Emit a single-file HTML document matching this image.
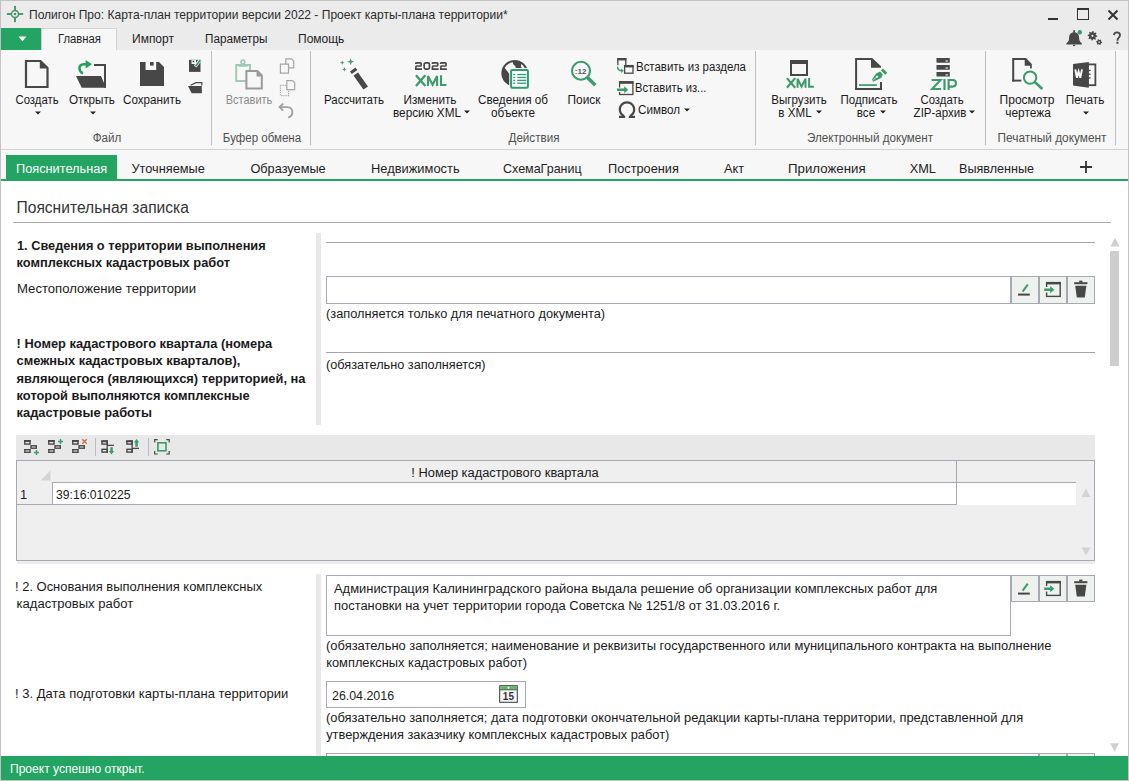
<!DOCTYPE html>
<html><head><meta charset="utf-8"><style>
html,body{margin:0;padding:0;width:1129px;height:781px;overflow:hidden;background:#fff;}
body{position:relative;font-family:"Liberation Sans", sans-serif;}
.t{position:absolute;white-space:nowrap;}
.r{position:absolute;}
svg.r{overflow:visible;}
</style></head><body>
<div class="r" style="left:0px;top:0px;width:1129px;height:28px;background:#ebebeb;"></div>
<div class="t" style="left:29px;top:8px;font-size:12.05px;line-height:14px;font-weight:400;color:#2b2b2b;transform-origin:0 0;">Полигон Про: Карта-план территории версии 2022 - Проект карты-плана территории*</div>
<svg class="r" style="left:5px;top:4px" width="20" height="20" viewBox="0 0 20 20"><circle cx="10" cy="10" r="3.55" fill="none" stroke="#45966c" stroke-width="1.5"/><circle cx="10" cy="10" r="1.3" fill="#45966c"/><rect x="9.05" y="1.9" width="1.9" height="4.6" fill="#45966c"/><rect x="9.05" y="13.5" width="1.9" height="4.6" fill="#45966c"/><rect x="1.9" y="9.05" width="4.6" height="1.9" fill="#45966c"/><rect x="13.5" y="9.05" width="4.6" height="1.9" fill="#45966c"/></svg>
<div class="r" style="left:1048px;top:18px;width:10px;height:2px;background:#333;"></div>
<div class="r" style="left:1077px;top:8px;width:12px;height:12px;box-sizing:border-box;border:1.5px solid #333;border-top-width:2px;"></div>
<svg class="r" style="left:1107px;top:9px" width="12" height="12" viewBox="0 0 12 12"><path d="M1.5 1.5L10.5 10.5M10.5 1.5L1.5 10.5" stroke="#333" stroke-width="2"/></svg>
<div class="r" style="left:0px;top:28px;width:1129px;height:22px;background:#ebebeb;"></div>
<div class="r" style="left:1px;top:28px;width:40px;height:22px;background:#23a462;"></div>
<svg class="r" style="left:18px;top:36px" width="9" height="6" viewBox="0 0 9 6"><path d="M0.5 0.5H8.5L4.5 5.2Z" fill="#fff"/></svg>
<div class="r" style="left:41px;top:28px;width:76px;height:23px;background:#f7f7f7;box-sizing:border-box;border:1px solid #d2d2d2;border-bottom:none;"></div>
<div class="t" style="left:57.5px;top:32px;font-size:12px;line-height:14px;font-weight:400;color:#1e1e1e;transform:scaleX(0.94);transform-origin:0 0;">Главная</div>
<div class="t" style="left:132px;top:32px;font-size:12px;line-height:14px;font-weight:400;color:#1e1e1e;transform-origin:0 0;">Импорт</div>
<div class="t" style="left:205.3px;top:32px;font-size:12px;line-height:14px;font-weight:400;color:#1e1e1e;transform:scaleX(0.975);transform-origin:0 0;">Параметры</div>
<div class="t" style="left:298px;top:32px;font-size:12px;line-height:14px;font-weight:400;color:#1e1e1e;transform-origin:0 0;">Помощь</div>
<svg class="r" style="left:1062px;top:27px" width="24" height="22" viewBox="0 0 24 22"><path d="M12.1 5.3c-3.2 0-4.9 2.4-5 5.4-.1 2.6-.4 3.8-2.7 5.6v1.3h15.4v-1.3c-2.3-1.8-2.6-3-2.7-5.6-.1-3-1.8-5.4-5-5.4z" fill="#474747"/><rect x="11.2" y="3.2" width="1.8" height="2.2" fill="#474747"/><rect x="11" y="17.9" width="2.2" height="1.2" fill="#474747"/><circle cx="17.8" cy="5.2" r="2.2" fill="#3a9a68"/></svg>
<svg class="r" style="left:1085px;top:28px" width="20" height="20" viewBox="0 0 20 20"><polygon points="12.30,7.80 12.21,8.74 10.69,9.12 10.37,9.72 10.89,11.19 10.17,11.79 8.82,10.99 8.17,11.19 7.50,12.60 6.56,12.51 6.18,10.99 5.58,10.67 4.11,11.19 3.51,10.47 4.31,9.12 4.11,8.47 2.70,7.80 2.79,6.86 4.31,6.48 4.63,5.88 4.11,4.41 4.83,3.81 6.18,4.61 6.83,4.41 7.50,3.00 8.44,3.09 8.82,4.61 9.42,4.93 10.89,4.41 11.49,5.13 10.69,6.48 10.89,7.13" fill="#474747"/><circle cx="7.5" cy="7.8" r="1.1" fill="#ebebeb"/><polygon points="17.10,14.10 17.00,14.88 15.97,15.18 15.63,15.63 15.60,16.70 14.88,17.00 14.10,16.26 13.54,16.19 12.60,16.70 11.98,16.22 12.23,15.18 12.01,14.66 11.10,14.10 11.20,13.32 12.23,13.02 12.57,12.57 12.60,11.50 13.32,11.20 14.10,11.94 14.66,12.01 15.60,11.50 16.22,11.98 15.97,13.02 16.19,13.54" fill="#474747"/><circle cx="14.1" cy="14.1" r="0.8" fill="#ebebeb"/></svg>
<svg class="r" style="left:1111px;top:30px" width="12" height="16" viewBox="0 0 12 16"><path d="M2.9 5.2C3.1 3.3 4.3 2.4 5.9 2.4c1.8 0 3.1 1.1 3.1 2.8 0 2.3-2.5 2.6-2.5 4.9v.7" fill="none" stroke="#474747" stroke-width="1.8"/><rect x="5.4" y="11.8" width="2.1" height="1.9" fill="#474747"/></svg>
<div class="r" style="left:0px;top:50px;width:1129px;height:99px;background:#f7f7f7;"></div>
<div class="r" style="left:0px;top:149px;width:1129px;height:1px;background:#d2d2d2;"></div>
<div class="r" style="left:211px;top:51px;width:1px;height:94px;background:#bdbdc4;"></div>
<div class="r" style="left:310px;top:51px;width:1px;height:94px;background:#bdbdc4;"></div>
<div class="r" style="left:755px;top:51px;width:1px;height:94px;background:#bdbdc4;"></div>
<div class="r" style="left:985px;top:51px;width:1px;height:94px;background:#bdbdc4;"></div>
<div class="r" style="left:1115px;top:51px;width:1px;height:94px;background:#bdbdc4;"></div>
<div class="t" style="left:-43.50px;top:131px;width:300px;text-align:center;font-size:12px;line-height:14px;font-weight:400;color:#505050;transform:scaleX(0.97);transform-origin:50% 0;">Файл</div>
<div class="t" style="left:111.50px;top:131px;width:300px;text-align:center;font-size:12px;line-height:14px;font-weight:400;color:#505050;transform:scaleX(0.96);transform-origin:50% 0;">Буфер обмена</div>
<div class="t" style="left:383.50px;top:131px;width:300px;text-align:center;font-size:12px;line-height:14px;font-weight:400;color:#505050;transform:scaleX(0.97);transform-origin:50% 0;">Действия</div>
<div class="t" style="left:720.00px;top:131px;width:300px;text-align:center;font-size:12px;line-height:14px;font-weight:400;color:#505050;transform:scaleX(0.97);transform-origin:50% 0;">Электронный документ</div>
<div class="t" style="left:901.50px;top:131px;width:300px;text-align:center;font-size:12px;line-height:14px;font-weight:400;color:#505050;transform:scaleX(0.988);transform-origin:50% 0;">Печатный документ</div>
<svg class="r" style="left:24px;top:59px" width="26" height="30" viewBox="0 0 26 30"><path d="M2 2H16.5L23.5 9V28H2Z" fill="none" stroke="#474747" stroke-width="2.2"/><path d="M15.8 1V9.4H24.4Z" fill="#474747"/></svg>
<div class="t" style="left:-113.50px;top:93px;width:300px;text-align:center;font-size:12px;line-height:14px;font-weight:400;color:#1a1a1a;transform:scaleX(0.945);transform-origin:50% 0;">Создать</div>
<svg class="r" style="left:35px;top:111px" width="6" height="4" viewBox="0 0 6 4"><path d="M0 0.5H6L3 3.6Z" fill="#222"/></svg>
<svg class="r" style="left:70px;top:54px" width="40" height="38" viewBox="0 0 40 38"><path d="M24 11H35V33.7" fill="none" stroke="#474747" stroke-width="2"/><path d="M6 22H31L36 33.7H11.7Z" fill="#474747"/><path d="M13 19.3C8.5 17.5 7.8 10.6 13.8 10.3H17.5" fill="none" stroke="#22a060" stroke-width="2.6"/><path d="M15.6 5.9L22 10.2L15.6 14.5Z" fill="#22a060"/></svg>
<div class="t" style="left:-58.00px;top:93px;width:300px;text-align:center;font-size:12px;line-height:14px;font-weight:400;color:#1a1a1a;transform:scaleX(0.975);transform-origin:50% 0;">Открыть</div>
<svg class="r" style="left:90px;top:111px" width="6" height="4" viewBox="0 0 6 4"><path d="M0 0.5H6L3 3.6Z" fill="#222"/></svg>
<svg class="r" style="left:140px;top:62px" width="24" height="24" viewBox="0 0 24 24"><path d="M0 0H19L24 5V24H0Z" fill="#474747"/><rect x="5.6" y="0" width="10.6" height="8" fill="#f7f7f7"/><rect x="10" y="0" width="3.6" height="3.6" fill="#474747"/></svg>
<div class="t" style="left:2.00px;top:93px;width:300px;text-align:center;font-size:12px;line-height:14px;font-weight:400;color:#1a1a1a;transform:scaleX(0.972);transform-origin:50% 0;">Сохранить</div>
<svg class="r" style="left:188px;top:58px" width="14" height="15" viewBox="0 0 14 15"><path d="M1 1.8H12.5V13.9H1Z" fill="#474747"/><rect x="3.5" y="1.8" width="4.5" height="4.2" fill="#f7f7f7"/><rect x="4.6" y="2.6" width="1.6" height="1.6" fill="#474747"/><path d="M7.2 8.5L12.3 1.8" stroke="#f7f7f7" stroke-width="3.2"/><path d="M7.6 8.3L12.3 2" stroke="#3a9a68" stroke-width="1.7"/></svg>
<svg class="r" style="left:186px;top:80px" width="18" height="16" viewBox="0 0 18 16"><path d="M4.6 5.2L10 2.6H15.8V5.6" fill="none" stroke="#474747" stroke-width="1.2"/><path d="M2 6H15.8V13.3H5.7Z" fill="#474747"/></svg>
<svg class="r" style="left:233px;top:56px" width="32" height="36" viewBox="0 0 32 36"><path d="M3.2 9H17V25H3.2Z" fill="none" stroke="#9fcab3" stroke-width="1.9"/><circle cx="9.9" cy="6" r="1.9" fill="none" stroke="#9fcab3" stroke-width="1.7"/><rect x="5.5" y="8.2" width="9" height="2.6" fill="#9fcab3"/><path d="M13.4 15H24.5L28.8 19.3V32.6H13.4Z" fill="#f7f7f7" stroke="#9b9b9b" stroke-width="2"/><path d="M23.5 14V20.5H30Z" fill="#9b9b9b"/></svg>
<div class="t" style="left:99.00px;top:93px;width:300px;text-align:center;font-size:12px;line-height:14px;font-weight:400;color:#8c8c8c;transform:scaleX(0.915);transform-origin:50% 0;">Вставить</div>
<svg class="r" style="left:278px;top:56px" width="18" height="20" viewBox="0 0 18 20"><path d="M7.8 2.8H13.6L15.7 4.9V11.8H7.8Z" fill="#f7f7f7" stroke="#a5a5a5" stroke-width="1.2"/><path d="M2.4 8.1H10.5V17.2H2.4Z" fill="#f7f7f7" stroke="#a5a5a5" stroke-width="1.2"/></svg>
<svg class="r" style="left:278px;top:78px" width="18" height="20" viewBox="0 0 18 20"><path d="M8.8 2.6H14.6L16.7 4.7V11.6H8.8Z" fill="#f7f7f7" stroke="#a5a5a5" stroke-width="1.2"/><path d="M2.4 7.4H8.5M2.4 7.4V17.6H10.6V11.6" fill="none" stroke="#a5a5a5" stroke-width="1.1" stroke-dasharray="1.1 1.1"/></svg>
<svg class="r" style="left:277px;top:100px" width="19" height="20" viewBox="0 0 19 20"><path d="M3.2 7.1H10.5C13.6 7.1 15.4 9.4 15.4 12.2S13.4 16.9 11.2 17.6" fill="none" stroke="#a0a0a0" stroke-width="1.9"/><path d="M6.2 3.6L2.6 7.1L6.2 10.6" fill="none" stroke="#a0a0a0" stroke-width="1.9"/></svg>
<svg class="r" style="left:330px;top:54px" width="44" height="40" viewBox="0 0 44 40"><path d="M20 17.5L25.5 13.6L27.3 16.1L21.8 20Z" fill="#474747"/><path d="M23.5 21.5L28 18.4L38 32.4L33.4 35.6Z" fill="#474747"/><path d="M20.7 4.2L21.6 6.8L24.2 7.7L21.6 8.6L20.7 11.2L19.8 8.6L17.2 7.7L19.8 6.8Z" fill="#3d9a6b"/><path d="M12.3 6.4L12.9 8.1L14.6 8.7L12.9 9.3L12.3 11L11.7 9.3L10 8.7L11.7 8.1Z" fill="#3d9a6b"/><path d="M14.4 13.1L15 14.8L16.7 15.4L15 16L14.4 17.7L13.8 16L12.1 15.4L13.8 14.8Z" fill="#3d9a6b"/></svg>
<div class="t" style="left:204.00px;top:93px;width:300px;text-align:center;font-size:12px;line-height:14px;font-weight:400;color:#1a1a1a;transform:scaleX(0.958);transform-origin:50% 0;">Рассчитать</div>
<svg class="r" style="left:415px;top:62px" width="33" height="9" viewBox="0 0 33 9"><path d="M0.85 2.05 V1.25 Q0.85 0.85 1.6 0.85 H5.4 Q6.15 0.85 6.15 1.6 V3.0 Q6.15 4.0 5.4 4.0 H1.6 Q0.85 4.0 0.85 5.6 V7.15 H7" fill="none" stroke="#474747" stroke-width="1.7"/><rect x="9.15" y="0.85" width="5.3" height="6.3" rx="1.6" fill="none" stroke="#474747" stroke-width="1.7"/><path d="M17.450000000000003 2.05 V1.25 Q17.450000000000003 0.85 18.200000000000003 0.85 H22.0 Q22.75 0.85 22.75 1.6 V3.0 Q22.75 4.0 22.0 4.0 H18.200000000000003 Q17.450000000000003 4.0 17.450000000000003 5.6 V7.15 H23.6" fill="none" stroke="#474747" stroke-width="1.7"/><path d="M25.75 2.05 V1.25 Q25.75 0.85 26.5 0.85 H30.299999999999997 Q31.049999999999997 0.85 31.049999999999997 1.6 V3.0 Q31.049999999999997 4.0 30.299999999999997 4.0 H26.5 Q25.75 4.0 25.75 5.6 V7.15 H31.9" fill="none" stroke="#474747" stroke-width="1.7"/></svg>
<svg class="r" style="left:413px;top:73px" width="37" height="16" viewBox="0 0 37 16"><path d="M2.95 2.3 L12.35 13.0 M12.35 2.3 L2.95 13.0" stroke="#3d9a6b" stroke-width="2.31" fill="none"/><path d="M14.97 13.0 V2.93 L19.55 11.74 L24.12 2.93 V13.0" stroke="#3d9a6b" stroke-width="2.1" fill="none" stroke-linejoin="miter"/><path d="M28.02 2.3 V11.95 H33.50" stroke="#3d9a6b" stroke-width="2.1" fill="none"/></svg>
<div class="t" style="left:279.50px;top:93px;width:300px;text-align:center;font-size:12px;line-height:14px;font-weight:400;color:#1a1a1a;transform:scaleX(0.979);transform-origin:50% 0;">Изменить</div>
<div class="t" style="left:277.00px;top:106px;width:300px;text-align:center;font-size:12px;line-height:14px;font-weight:400;color:#1a1a1a;transform:scaleX(0.981);transform-origin:50% 0;">версию XML</div>
<svg class="r" style="left:464px;top:110px" width="6" height="4" viewBox="0 0 6 4"><path d="M0 0.5H6L3 3.6Z" fill="#222"/></svg>
<svg class="r" style="left:496px;top:54px" width="40" height="40" viewBox="0 0 40 40"><circle cx="18.7" cy="19.2" r="13.3" fill="#474747"/><clipPath id="gclip"><circle cx="18.7" cy="19.2" r="11.3"/></clipPath><g clip-path="url(#gclip)"><path d="M7.8 12.8L12 6L16.4 5.5L17.2 10.2L19.6 12.6L19.6 15.5L14 15.5L14 20.8Z" fill="#f7f7f7"/><path d="M25.2 9.6L32 9.6L32 14.8H26.3L25 12.4Z" fill="#f7f7f7"/></g><rect x="13.2" y="14" width="20.6" height="21.8" rx="1.5" fill="#f7f7f7"/><rect x="15.1" y="15.9" width="16.8" height="17.9" rx="1" fill="#fff" stroke="#2a9d72" stroke-width="2"/><g fill="#2a9d72"><rect x="17.2" y="19.9" width="1.9" height="1.3"/><rect x="21.3" y="19.9" width="8.9" height="1.3"/><rect x="17.2" y="22.8" width="1.9" height="1.3"/><rect x="21.3" y="22.8" width="8.9" height="1.3"/><rect x="17.2" y="25.7" width="1.9" height="1.3"/><rect x="21.3" y="25.7" width="8.9" height="1.3"/><rect x="17.2" y="28.6" width="1.9" height="1.3"/><rect x="21.3" y="28.6" width="8.9" height="1.3"/></g></svg>
<div class="t" style="left:363.00px;top:93px;width:300px;text-align:center;font-size:12px;line-height:14px;font-weight:400;color:#1a1a1a;transform:scaleX(0.976);transform-origin:50% 0;">Сведения об</div>
<div class="t" style="left:363.00px;top:106px;width:300px;text-align:center;font-size:12px;line-height:14px;font-weight:400;color:#1a1a1a;transform:scaleX(0.983);transform-origin:50% 0;">объекте</div>
<svg class="r" style="left:566px;top:56px" width="36" height="36" viewBox="0 0 36 36"><circle cx="15" cy="14.75" r="9" fill="none" stroke="#3d9a6b" stroke-width="2.1"/><path d="M21.5 21.5L29.3 29.3" stroke="#3d9a6b" stroke-width="3.5"/><text x="14.6" y="17.7" font-family="Liberation Sans" font-weight="700" font-size="8" text-anchor="middle" fill="#555">:12</text></svg>
<div class="t" style="left:433.50px;top:93px;width:300px;text-align:center;font-size:12px;line-height:14px;font-weight:400;color:#1a1a1a;transform:scaleX(0.99);transform-origin:50% 0;">Поиск</div>
<svg class="r" style="left:612px;top:54px" width="24" height="22" viewBox="0 0 24 22"><path d="M5.8 4.6H13.8V12" fill="none" stroke="#474747" stroke-width="1.3"/><rect x="5.2" y="4" width="9.2" height="2.4" fill="#474747"/><path d="M5.8 5V11.2" fill="none" stroke="#474747" stroke-width="1.3"/><rect x="12.6" y="11.6" width="8.4" height="7.6" fill="#f7f7f7" stroke="#474747" stroke-width="1.3"/><rect x="12" y="11" width="9.6" height="2.4" fill="#474747"/><path d="M5.6 12.8C5.6 16.4 7.5 16.8 10 16.8" fill="none" stroke="#3d9a6b" stroke-width="1.5"/><path d="M9.2 14.6L11.8 16.8L9.2 19Z" fill="#3d9a6b"/></svg>
<div class="t" style="left:635.5px;top:60px;font-size:12px;line-height:14px;font-weight:400;color:#1a1a1a;transform:scaleX(0.955);transform-origin:0 0;">Вставить из раздела</div>
<svg class="r" style="left:612px;top:78px" width="24" height="20" viewBox="0 0 24 20"><rect x="7.6" y="3.9" width="13.3" height="12.6" fill="none" stroke="#474747" stroke-width="1.3"/><rect x="7" y="3.2" width="14.5" height="2.6" fill="#474747"/><rect x="4" y="9.5" width="9" height="4.4" fill="#f7f7f7"/><path d="M5 10.4H12.2V8.2L16.2 11.7L12.2 15.2V13H5Z" fill="#3d9a6b"/></svg>
<div class="t" style="left:635px;top:81px;font-size:12px;line-height:14px;font-weight:400;color:#1a1a1a;transform:scaleX(0.935);transform-origin:0 0;">Вставить из...</div>
<svg class="r" style="left:616px;top:100px" width="22" height="20" viewBox="0 0 22 20"><path d="M8 16.1A7.2 7.2 0 1 1 14 16.1" fill="none" stroke="#474747" stroke-width="2.1"/><rect x="3" y="15.8" width="6.2" height="2.2" fill="#474747"/><rect x="12.8" y="15.8" width="6.2" height="2.2" fill="#474747"/></svg>
<div class="t" style="left:637.6px;top:103px;font-size:12px;line-height:14px;font-weight:400;color:#1a1a1a;transform:scaleX(0.97);transform-origin:0 0;">Символ</div>
<svg class="r" style="left:684px;top:108px" width="6" height="4" viewBox="0 0 6 4"><path d="M0 0.5H6L3 3.6Z" fill="#222"/></svg>
<div class="r" style="left:790px;top:60px;width:18px;height:16px;box-sizing:border-box;border:2px solid #474747;border-top-width:4px;"></div>
<svg class="r" style="left:784px;top:76px" width="32" height="14" viewBox="0 0 32 14"><path d="M2.90 2.1 L11.17 11.799999999999999 M11.17 2.1 L2.90 11.799999999999999" stroke="#3d9a6b" stroke-width="2.20" fill="none"/><path d="M13.56 11.799999999999999 V2.70 L17.54 10.60 L21.53 2.70 V11.799999999999999" stroke="#3d9a6b" stroke-width="2.0" fill="none" stroke-linejoin="miter"/><path d="M25.12 2.1 V10.80 H29.90" stroke="#3d9a6b" stroke-width="2.0" fill="none"/></svg>
<div class="t" style="left:648.50px;top:93px;width:300px;text-align:center;font-size:12px;line-height:14px;font-weight:400;color:#1a1a1a;transform:scaleX(0.965);transform-origin:50% 0;">Выгрузить</div>
<div class="t" style="left:645.00px;top:106px;width:300px;text-align:center;font-size:12px;line-height:14px;font-weight:400;color:#1a1a1a;transform:scaleX(0.97);transform-origin:50% 0;">в XML</div>
<svg class="r" style="left:816px;top:110px" width="6" height="4" viewBox="0 0 6 4"><path d="M0 0.5H6L3 3.6Z" fill="#222"/></svg>
<svg class="r" style="left:850px;top:54px" width="42" height="40" viewBox="0 0 42 40"><path d="M6.1 34.9V5.1H21.5" fill="none" stroke="#474747" stroke-width="2"/><path d="M5.1 34.9H31V28" fill="none" stroke="#474747" stroke-width="2"/><path d="M21 4.1H22.2L31 12.3V13.8H21Z" fill="#474747"/><rect x="9" y="30.2" width="17.9" height="1.7" fill="#3a9a68"/><path d="M22 25.6L26.1 19.5L30.2 17.4L32.8 20.5L31.2 24.1L23 27.7Z" fill="#3a9a68"/><path d="M31 16.6L33 14.6L37.2 18.8L35.2 20.8Z" fill="#3a9a68"/><path d="M22.6 26.6L26.6 23" stroke="#f7f7f7" stroke-width="0.8"/><circle cx="27" cy="22.8" r="1.1" fill="#f7f7f7"/></svg>
<div class="t" style="left:719.00px;top:93px;width:300px;text-align:center;font-size:12px;line-height:14px;font-weight:400;color:#1a1a1a;transform:scaleX(0.96);transform-origin:50% 0;">Подписать</div>
<div class="t" style="left:716.00px;top:106px;width:300px;text-align:center;font-size:12px;line-height:14px;font-weight:400;color:#1a1a1a;transform:scaleX(0.97);transform-origin:50% 0;">все</div>
<svg class="r" style="left:880px;top:110px" width="6" height="4" viewBox="0 0 6 4"><path d="M0 0.5H6L3 3.6Z" fill="#222"/></svg>
<svg class="r" style="left:926px;top:54px" width="36" height="38" viewBox="0 0 36 38"><rect x="10.5" y="4.1" width="13.3" height="4.6" rx="0.4" fill="#474747"/><rect x="19.5" y="6.3999999999999995" width="2.4" height="1.2" fill="#e8e8e8"/><rect x="10.5" y="11.1" width="13.3" height="4.6" rx="0.4" fill="#474747"/><rect x="19.5" y="13.399999999999999" width="2.4" height="1.2" fill="#e8e8e8"/><rect x="10.5" y="18" width="13.3" height="4.6" rx="0.4" fill="#474747"/><rect x="19.5" y="20.3" width="2.4" height="1.2" fill="#e8e8e8"/><path d="M5.6 26H14.6L6.2 35H15" fill="none" stroke="#3d9a6b" stroke-width="2.1" stroke-linejoin="miter"/><rect x="17.4" y="25" width="2.2" height="11" fill="#3d9a6b"/><path d="M22.6 36V26H26.6C28.8 26 30 27.4 30 29.3S28.8 32.6 26.6 32.6H22.6" fill="none" stroke="#3d9a6b" stroke-width="2.1"/></svg>
<div class="t" style="left:791.50px;top:93px;width:300px;text-align:center;font-size:12px;line-height:14px;font-weight:400;color:#1a1a1a;transform:scaleX(0.945);transform-origin:50% 0;">Создать</div>
<div class="t" style="left:790.00px;top:106px;width:300px;text-align:center;font-size:12px;line-height:14px;font-weight:400;color:#1a1a1a;transform:scaleX(0.96);transform-origin:50% 0;">ZIP-архив</div>
<svg class="r" style="left:969px;top:110px" width="6" height="4" viewBox="0 0 6 4"><path d="M0 0.5H6L3 3.6Z" fill="#222"/></svg>
<svg class="r" style="left:1006px;top:54px" width="40" height="38" viewBox="0 0 40 38"><path d="M7.2 27.5V5H19.2" fill="none" stroke="#474747" stroke-width="2"/><path d="M6.2 26.6H15.4" stroke="#474747" stroke-width="1.9"/><path d="M18.7 4H20L25.8 10V14.6H24.1V11.7H18.7Z" fill="#474747"/><circle cx="24.1" cy="23.6" r="6.2" fill="none" stroke="#3d9a6b" stroke-width="2"/><path d="M29 28.3L36.4 35" stroke="#3d9a6b" stroke-width="2.6"/></svg>
<div class="t" style="left:877.00px;top:93px;width:300px;text-align:center;font-size:12px;line-height:14px;font-weight:400;color:#1a1a1a;transform-origin:50% 0;">Просмотр</div>
<div class="t" style="left:878.00px;top:106px;width:300px;text-align:center;font-size:12px;line-height:14px;font-weight:400;color:#1a1a1a;transform:scaleX(0.99);transform-origin:50% 0;">чертежа</div>
<svg class="r" style="left:1070px;top:60px" width="30" height="30" viewBox="0 0 30 30"><rect x="17.8" y="4.4" width="7.6" height="20.8" fill="none" stroke="#474747" stroke-width="1.8"/><path d="M3 4L18.8 2.1V27.7L3 25.6Z" fill="#474747"/><g fill="#474747"><rect x="18" y="9.8" width="2.6" height="1.3"/><rect x="18" y="13.6" width="2.6" height="1.3"/><rect x="18" y="17.3" width="2.6" height="1.3"/></g><path d="M5.3 9.4L6.9 17.7L8.6 11.5L10.3 17.7L12 9.4" fill="none" stroke="#fff" stroke-width="1.9" stroke-linejoin="miter"/></svg>
<div class="t" style="left:935.00px;top:93px;width:300px;text-align:center;font-size:12px;line-height:14px;font-weight:400;color:#1a1a1a;transform:scaleX(0.98);transform-origin:50% 0;">Печать</div>
<svg class="r" style="left:1083px;top:111px" width="6" height="4" viewBox="0 0 6 4"><path d="M0 0.5H6L3 3.6Z" fill="#222"/></svg>
<div class="r" style="left:0px;top:150px;width:1129px;height:29px;background:#f7f7f7;"></div>
<div class="r" style="left:6px;top:155px;width:111px;height:24px;background:#23a462;"></div>
<div class="r" style="left:1px;top:179px;width:1127px;height:2px;background:#23a462;"></div>
<div class="t" style="left:16px;top:161px;font-size:12.75px;line-height:15px;font-weight:400;color:#fff;transform-origin:0 0;">Пояснительная</div>
<div class="t" style="left:131.5px;top:161px;font-size:12.75px;line-height:15px;font-weight:400;color:#1e1e1e;transform-origin:0 0;">Уточняемые</div>
<div class="t" style="left:250.4px;top:161px;font-size:12.75px;line-height:15px;font-weight:400;color:#1e1e1e;transform-origin:0 0;">Образуемые</div>
<div class="t" style="left:370.6px;top:161px;font-size:12.75px;line-height:15px;font-weight:400;color:#1e1e1e;transform:scaleX(1.01);transform-origin:0 0;">Недвижимость</div>
<div class="t" style="left:503px;top:161px;font-size:12.75px;line-height:15px;font-weight:400;color:#1e1e1e;transform:scaleX(0.98);transform-origin:0 0;">СхемаГраниц</div>
<div class="t" style="left:608px;top:161px;font-size:12.75px;line-height:15px;font-weight:400;color:#1e1e1e;transform-origin:0 0;">Построения</div>
<div class="t" style="left:724px;top:161px;font-size:12.75px;line-height:15px;font-weight:400;color:#1e1e1e;transform-origin:0 0;">Акт</div>
<div class="t" style="left:788px;top:161px;font-size:12.75px;line-height:15px;font-weight:400;color:#1e1e1e;transform:scaleX(1.04);transform-origin:0 0;">Приложения</div>
<div class="t" style="left:909.7px;top:161px;font-size:12.75px;line-height:15px;font-weight:400;color:#1e1e1e;transform-origin:0 0;">XML</div>
<div class="t" style="left:959px;top:161px;font-size:12.75px;line-height:15px;font-weight:400;color:#1e1e1e;transform:scaleX(0.987);transform-origin:0 0;">Выявленные</div>
<svg class="r" style="left:1079px;top:160px" width="14" height="14" viewBox="0 0 14 14"><path d="M7 1V13M1 7H13" stroke="#333" stroke-width="1.8"/></svg>
<div class="t" style="left:16.5px;top:199px;font-size:15.6px;line-height:17px;font-weight:400;color:#333333;transform-origin:0 0;">Пояснительная записка</div>
<div class="r" style="left:13px;top:222px;width:1098px;height:1px;background:#aaaab2;"></div>
<div class="r" style="left:316px;top:233px;width:5px;height:192px;background:#e8e8e8;"></div>
<div class="t" style="left:16.6px;top:238px;font-size:12.85px;line-height:15px;font-weight:700;color:#1a1a1a;transform:scaleX(0.993);transform-origin:0 0;">1. Сведения о территории выполнения</div>
<div class="t" style="left:16.6px;top:255px;font-size:12.85px;line-height:15px;font-weight:700;color:#1a1a1a;transform-origin:0 0;">комплексных кадастровых работ</div>
<div class="t" style="left:16.6px;top:281px;font-size:13.05px;line-height:15px;font-weight:400;color:#1a1a1a;transform:scaleX(1.006);transform-origin:0 0;">Местоположение территории</div>
<div class="r" style="left:326px;top:242px;width:769px;height:1px;background:#a3a3a8;"></div>
<div class="r" style="left:326px;top:276px;width:685px;height:28px;background:#fff;box-sizing:border-box;border:1px solid #a8a8b2;"></div>
<div class="r" style="left:1011px;top:276px;width:28px;height:28px;background:#eef2ef;box-sizing:border-box;border:1px solid #a8a8b2;"></div>
<div class="r" style="left:1039px;top:276px;width:28px;height:28px;background:#eef2ef;box-sizing:border-box;border:1px solid #a8a8b2;"></div>
<div class="r" style="left:1067px;top:276px;width:28px;height:28px;background:#eef2ef;box-sizing:border-box;border:1px solid #a8a8b2;"></div>
<svg class="r" style="left:1011px;top:276px" width="28" height="27" viewBox="0 0 28 27"><rect x="7" y="17.6" width="11.8" height="2" fill="#474747"/><path d="M11.6 15.6L16.8 8.6" stroke="#3a9a68" stroke-width="2"/></svg>
<svg class="r" style="left:1039px;top:276px" width="28" height="27" viewBox="0 0 28 27"><rect x="7.6" y="6.6" width="13.6" height="13.8" fill="none" stroke="#474747" stroke-width="1.4"/><rect x="7" y="6" width="14.8" height="2.4" fill="#474747"/><rect x="4.8" y="11" width="9" height="5.6" fill="#eef2ef"/><path d="M5.2 12.4H11.2V10.2L15.4 13.7L11.2 17.2V15H5.2Z" fill="#3d9a6b"/></svg>
<svg class="r" style="left:1067px;top:276px" width="28" height="27" viewBox="0 0 28 27"><rect x="7.2" y="6.2" width="13.2" height="2" fill="#474747"/><rect x="12.2" y="4.6" width="3.2" height="2" fill="#474747"/><path d="M8.2 9.8H19.4L17.8 21.4H9.8Z" fill="#474747"/></svg>
<div class="t" style="left:326.3px;top:306px;font-size:12.85px;line-height:15px;font-weight:400;color:#1a1a1a;transform:scaleX(0.996);transform-origin:0 0;">(заполняется только для печатного документа)</div>
<div class="t" style="left:16.6px;top:336px;font-size:12.85px;line-height:15px;font-weight:700;color:#1a1a1a;transform-origin:0 0;">! Номер кадастрового квартала (номера</div>
<div class="t" style="left:16.6px;top:353px;font-size:12.85px;line-height:15px;font-weight:700;color:#1a1a1a;transform-origin:0 0;">смежных кадастровых кварталов),</div>
<div class="t" style="left:16.6px;top:371px;font-size:12.85px;line-height:15px;font-weight:700;color:#1a1a1a;transform-origin:0 0;">являющегося (являющихся) территорией, на</div>
<div class="t" style="left:16.6px;top:388px;font-size:12.85px;line-height:15px;font-weight:700;color:#1a1a1a;transform-origin:0 0;">которой выполняются комплексные</div>
<div class="t" style="left:16.6px;top:405px;font-size:12.85px;line-height:15px;font-weight:700;color:#1a1a1a;transform-origin:0 0;">кадастровые работы</div>
<div class="r" style="left:326px;top:352px;width:769px;height:1px;background:#a3a3a8;"></div>
<div class="t" style="left:326.2px;top:357px;font-size:12.85px;line-height:15px;font-weight:400;color:#1a1a1a;transform:scaleX(0.99);transform-origin:0 0;">(обязательно заполняется)</div>
<svg class="r" style="left:1110px;top:237px" width="10" height="10" viewBox="0 0 10 10"><path d="M0.5 9.5H9.5L5 0.8Z" fill="#d0d0d0"/></svg>
<div class="r" style="left:1110px;top:251px;width:9px;height:115px;background:#cdcdcd;"></div>
<svg class="r" style="left:1110px;top:743px" width="10" height="9" viewBox="0 0 10 9"><path d="M0.2 0.2H9L4.6 8.7Z" fill="#d0d0d0"/></svg>
<div class="r" style="left:16px;top:435px;width:1079px;height:25px;background:#e8e8e8;"></div>
<svg class="r" style="left:16px;top:435px" width="170" height="25" viewBox="0 0 170 25"><rect x="8.80" y="5.80" width="5.20" height="3.30" fill="none" stroke="#474747" stroke-width="1.4"/><rect x="8.10" y="5.10" width="6.60" height="1.8" fill="#474747"/><rect x="15.00" y="10.80" width="5.30" height="2.40" fill="none" stroke="#474747" stroke-width="1.4"/><rect x="8.80" y="14.70" width="5.20" height="2.60" fill="none" stroke="#474747" stroke-width="1.4"/><rect x="32.80" y="5.80" width="5.20" height="3.30" fill="none" stroke="#474747" stroke-width="1.4"/><rect x="32.10" y="5.10" width="6.60" height="1.8" fill="#474747"/><rect x="39.00" y="10.80" width="5.30" height="2.40" fill="none" stroke="#474747" stroke-width="1.4"/><rect x="32.80" y="14.70" width="5.20" height="2.60" fill="none" stroke="#474747" stroke-width="1.4"/><rect x="56.80" y="5.80" width="5.20" height="3.30" fill="none" stroke="#474747" stroke-width="1.4"/><rect x="56.10" y="5.10" width="6.60" height="1.8" fill="#474747"/><rect x="63.00" y="10.80" width="5.30" height="2.40" fill="none" stroke="#474747" stroke-width="1.4"/><rect x="56.80" y="14.70" width="5.20" height="2.60" fill="none" stroke="#474747" stroke-width="1.4"/><path d="M20.5 15V20M18 17.5H23" stroke="#3d9a6b" stroke-width="1.4"/><path d="M44.5 4V9M42 6.5H47" stroke="#3d9a6b" stroke-width="1.4"/><path d="M66.3 4.300000000000011L70.7 8.699999999999989M70.7 4.300000000000011L66.3 8.699999999999989" stroke="#c8694e" stroke-width="1.3"/><rect x="86.00" y="6.10" width="5.20" height="3.00" fill="none" stroke="#474747" stroke-width="1.4"/><rect x="85.30" y="5.40" width="6.60" height="1.8" fill="#474747"/><rect x="86.00" y="14.30" width="5.20" height="2.80" fill="none" stroke="#474747" stroke-width="1.4"/><path d="M91.2 5.399999999999977V17.80000000000001M91.2 10.399999999999977H98" fill="none" stroke="#474747" stroke-width="1.3"/><path d="M94.3 12.199999999999989H96.8V16H98.2L95.55 19.600000000000023L92.9 16H94.3Z" fill="#3d9a6b"/><rect x="110.90" y="6.10" width="5.20" height="3.00" fill="none" stroke="#474747" stroke-width="1.4"/><rect x="110.20" y="5.40" width="6.60" height="1.8" fill="#474747"/><rect x="110.90" y="14.30" width="5.20" height="2.80" fill="none" stroke="#474747" stroke-width="1.4"/><path d="M116.1 5.399999999999977V17.80000000000001M116.1 13.300000000000011H123" fill="none" stroke="#474747" stroke-width="1.3"/><path d="M119.30000000000001 11.800000000000011H121.80000000000001V7.600000000000023H123.19999999999999L120.55000000000001 4L117.9 7.600000000000023H119.30000000000001Z" fill="#3d9a6b"/><path d="M138.7 7.600000000000023V4.600000000000023H141.7M150.2 4.600000000000023H153.2V7.600000000000023M153.2 16V19H150.2M141.7 19H138.7V16" fill="none" stroke="#474747" stroke-width="1.2"/><rect x="141.9" y="7.800000000000011" width="8.1" height="8" fill="none" stroke="#3d9a6b" stroke-width="1.6"/></svg>
<div class="r" style="left:95px;top:438px;width:1px;height:18px;background:#b8bcc6;"></div>
<div class="r" style="left:148px;top:438px;width:1px;height:18px;background:#b8bcc6;"></div>
<div class="r" style="left:16px;top:460px;width:1079px;height:101px;background:#efefef;box-sizing:border-box;border:1px solid #a8a8b2;"></div>
<div class="r" style="left:17px;top:561px;width:1078px;height:3px;background:#ececec;"></div>
<div class="r" style="left:52px;top:482px;width:1024px;height:1px;background:#a8a8b2;"></div>
<div class="r" style="left:956px;top:461px;width:1px;height:44px;background:#a8a8b2;"></div>
<div class="r" style="left:53px;top:483px;width:903px;height:21px;background:#fff;"></div>
<div class="r" style="left:957px;top:483px;width:119px;height:22px;background:#fff;"></div>
<div class="r" style="left:17px;top:504px;width:940px;height:1px;background:#a8a8b2;"></div>
<div class="r" style="left:52px;top:482px;width:1px;height:23px;background:#a8a8b2;"></div>
<svg class="r" style="left:40px;top:470px" width="11" height="11" viewBox="0 0 11 11"><path d="M10.5 0.5V10.5H0.5Z" fill="#d3d3d3"/></svg>
<div class="t" style="left:205.00px;top:465px;width:600px;text-align:center;font-size:12.85px;line-height:15px;font-weight:400;color:#1a1a1a;transform-origin:50% 0;">! Номер кадастрового квартала</div>
<div class="t" style="left:20px;top:487px;font-size:12.85px;line-height:15px;font-weight:400;color:#1a1a1a;transform-origin:0 0;">1</div>
<div class="t" style="left:56.2px;top:487px;font-size:12.85px;line-height:15px;font-weight:400;color:#1a1a1a;transform:scaleX(0.948);transform-origin:0 0;">39:16:010225</div>
<svg class="r" style="left:1081px;top:488px" width="10" height="10" viewBox="0 0 10 10"><path d="M0.5 9H9.5L5 0.6Z" fill="#d3d3d3"/></svg>
<svg class="r" style="left:1081px;top:547px" width="10" height="9" viewBox="0 0 10 9"><path d="M0.5 0.5H9.5L5 8.5Z" fill="#d3d3d3"/></svg>
<div class="r" style="left:316px;top:574px;width:5px;height:182px;background:#e8e8e8;"></div>
<div class="t" style="left:15.4px;top:579px;font-size:13.05px;line-height:15px;font-weight:400;color:#1a1a1a;transform:scaleX(0.992);transform-origin:0 0;">! 2. Основания выполнения комплексных</div>
<div class="t" style="left:16.6px;top:596px;font-size:13.05px;line-height:15px;font-weight:400;color:#1a1a1a;transform-origin:0 0;">кадастровых работ</div>
<div class="r" style="left:326px;top:575px;width:685px;height:61px;background:#fff;box-sizing:border-box;border:1px solid #a8a8b2;"></div>
<div class="r" style="left:1011px;top:575px;width:28px;height:27px;background:#eef2ef;box-sizing:border-box;border:1px solid #a8a8b2;"></div>
<div class="r" style="left:1039px;top:575px;width:28px;height:27px;background:#eef2ef;box-sizing:border-box;border:1px solid #a8a8b2;"></div>
<div class="r" style="left:1067px;top:575px;width:28px;height:27px;background:#eef2ef;box-sizing:border-box;border:1px solid #a8a8b2;"></div>
<svg class="r" style="left:1011px;top:575px" width="28" height="27" viewBox="0 0 28 27"><rect x="7" y="17.6" width="11.8" height="2" fill="#474747"/><path d="M11.6 15.6L16.8 8.6" stroke="#3a9a68" stroke-width="2"/></svg>
<svg class="r" style="left:1039px;top:575px" width="28" height="27" viewBox="0 0 28 27"><rect x="7.6" y="6.6" width="13.6" height="13.8" fill="none" stroke="#474747" stroke-width="1.4"/><rect x="7" y="6" width="14.8" height="2.4" fill="#474747"/><rect x="4.8" y="11" width="9" height="5.6" fill="#eef2ef"/><path d="M5.2 12.4H11.2V10.2L15.4 13.7L11.2 17.2V15H5.2Z" fill="#3d9a6b"/></svg>
<svg class="r" style="left:1067px;top:575px" width="28" height="27" viewBox="0 0 28 27"><rect x="7.2" y="6.2" width="13.2" height="2" fill="#474747"/><rect x="12.2" y="4.6" width="3.2" height="2" fill="#474747"/><path d="M8.2 9.8H19.4L17.8 21.4H9.8Z" fill="#474747"/></svg>
<div class="t" style="left:333.6px;top:581px;font-size:12.85px;line-height:15px;font-weight:400;color:#1a1a1a;transform:scaleX(1.0058);transform-origin:0 0;">Администрация Калининградского района выдала решение об организации комплексных работ для</div>
<div class="t" style="left:333.6px;top:598px;font-size:12.85px;line-height:15px;font-weight:400;color:#1a1a1a;transform:scaleX(1.0058);transform-origin:0 0;">постановки на учет территории города Советска № 1251/8 от 31.03.2016 г.</div>
<div class="t" style="left:326.2px;top:638px;font-size:12.85px;line-height:15px;font-weight:400;color:#1a1a1a;transform:scaleX(1.0083);transform-origin:0 0;">(обязательно заполняется; наименование и реквизиты государственного или муниципального контракта на выполнение</div>
<div class="t" style="left:326.2px;top:655px;font-size:12.85px;line-height:15px;font-weight:400;color:#1a1a1a;transform-origin:0 0;">комплексных кадастровых работ)</div>
<div class="t" style="left:15.4px;top:686px;font-size:12.98px;line-height:15px;font-weight:400;color:#1a1a1a;transform:scaleX(1.004);transform-origin:0 0;">! 3. Дата подготовки карты-плана территории</div>
<div class="r" style="left:326px;top:681px;width:200px;height:27px;background:#fff;box-sizing:border-box;border:1px solid #a8a8b2;"></div>
<div class="t" style="left:332.4px;top:688px;font-size:12.85px;line-height:15px;font-weight:400;color:#1a1a1a;transform:scaleX(0.965);transform-origin:0 0;">26.04.2016</div>
<svg class="r" style="left:498px;top:684px" width="21" height="20" viewBox="0 0 21 20"><rect x="1.7" y="1.7" width="17.6" height="16.6" fill="#f4f6f8" stroke="#3a3a3a" stroke-width="1"/><rect x="2.2" y="2.2" width="16.6" height="3.4" fill="#5cb662"/><path d="M2 5.8H19" stroke="#3a3a3a" stroke-width="0.8"/><circle cx="10.5" cy="3.7" r="1" fill="#fff"/><text x="10.4" y="16.3" font-family="Liberation Sans" font-size="10" font-weight="700" text-anchor="middle" fill="#333">15</text></svg>
<div class="t" style="left:326.2px;top:710px;font-size:12.85px;line-height:15px;font-weight:400;color:#1a1a1a;transform:scaleX(1.0063);transform-origin:0 0;">(обязательно заполняется; дата подготовки окончательной редакции карты-плана территории, представленной для</div>
<div class="t" style="left:326.2px;top:727px;font-size:12.85px;line-height:15px;font-weight:400;color:#1a1a1a;transform-origin:0 0;">утверждения заказчику комплексных кадастровых работ)</div>
<div class="r" style="left:326px;top:753px;width:713px;height:7px;background:#fff;box-sizing:border-box;border:1px solid #a8a8b2;"></div>
<div class="r" style="left:1039px;top:753px;width:28px;height:7px;background:#eef2ef;box-sizing:border-box;border:1px solid #a8a8b2;"></div>
<div class="r" style="left:1067px;top:753px;width:28px;height:7px;background:#eef2ef;box-sizing:border-box;border:1px solid #a8a8b2;"></div>
<div class="r" style="left:0px;top:756px;width:1129px;height:25px;background:#23a462;"></div>
<div class="t" style="left:10px;top:762px;font-size:12.05px;line-height:14px;font-weight:400;color:#fff;transform-origin:0 0;">Проект успешно открыт.</div>
<div class="r" style="left:0;top:0;width:1129px;height:781px;box-sizing:border-box;border:1px solid #c2c2c2;"></div>
</body></html>
